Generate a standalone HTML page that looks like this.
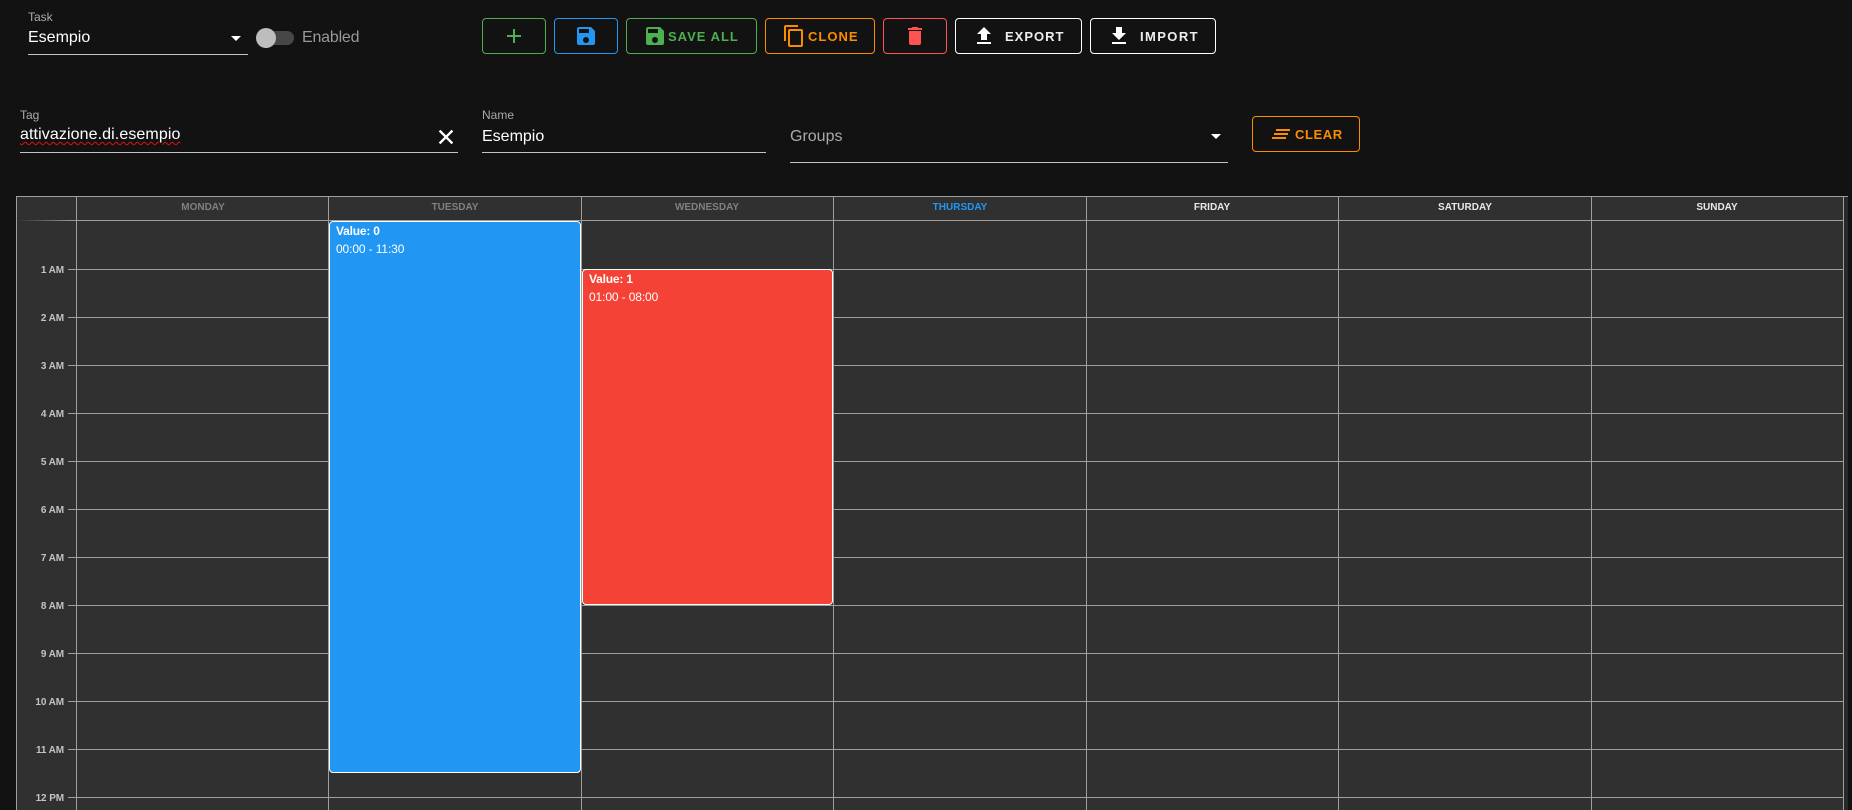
<!DOCTYPE html>
<html lang="en">
<head>
<meta charset="utf-8">
<title>Task scheduler</title>
<style>
html,body{margin:0;padding:0;background:#121212;}
body{position:relative;width:1852px;height:810px;overflow:hidden;font-family:"Liberation Sans",sans-serif;color:#fff;}
.a{position:absolute;}
.t{position:absolute;white-space:nowrap;line-height:20px;}
.btn{position:absolute;box-sizing:border-box;top:18px;height:36px;border:1px solid;border-radius:4px;}
.bt{position:absolute;white-space:nowrap;line-height:20px;font-size:13px;font-weight:bold;letter-spacing:1px;top:27px;}
svg{position:absolute;display:block;}
.v{position:absolute;top:196px;width:1px;height:614px;background:#9e9e9e;}
.h{position:absolute;left:68px;width:1775px;height:1px;background:#9e9e9e;}
.lb{position:absolute;left:16px;width:48px;text-align:right;font-size:10px;font-weight:bold;color:#c4c4c4;line-height:14px;white-space:nowrap;letter-spacing:-.1px;}
.d{position:absolute;top:198px;height:20px;line-height:20px;text-align:center;font-size:10px;font-weight:bold;white-space:nowrap;width:252px;letter-spacing:0;}
.ev{position:absolute;box-sizing:border-box;border:1px solid #fff;border-radius:4px;}
.ev b,.ev span{position:absolute;left:6px;white-space:nowrap;font-size:12px;line-height:16px;}
.ev b{top:1px;letter-spacing:-.2px;}
.ev span{top:19px;letter-spacing:-.12px;}
</style>
</head>
<body>

<!-- Task select -->
<div class="t" style="left:28px;top:7px;font-size:12px;color:#aaa;">Task</div>
<div class="t" style="left:28px;top:28px;font-size:16px;color:#fff;">Esempio</div>
<svg style="left:231px;top:36px" width="10" height="5" viewBox="0 0 10 5"><path d="M0 0H10L5 5Z" fill="#fff"/></svg>
<div class="a" style="left:28px;top:54px;width:220px;height:1px;background:#c4c4c4;"></div>

<!-- Switch -->
<div class="a" style="left:257px;top:31px;width:37px;height:14px;border-radius:7px;background:#474747;"></div>
<div class="a" style="left:256px;top:28px;width:20px;height:20px;border-radius:50%;background:#bdbdbd;"></div>
<div class="t" style="left:302px;top:28px;font-size:16px;color:#999;letter-spacing:-.2px;">Enabled</div>

<!-- Toolbar buttons -->
<div class="btn" style="left:482px;width:64px;border-color:#4caf50;"></div>
<svg style="left:502px;top:24px" width="24" height="24" viewBox="0 0 24 24"><path fill="#4caf50" d="M19,13H13V19H11V13H5V11H11V5H13V11H19V13Z"/></svg>

<div class="btn" style="left:554px;width:64px;border-color:#2196f3;"></div>
<svg style="left:574px;top:24px" width="24" height="24" viewBox="0 0 24 24"><path fill="#2196f3" d="M15,9H5V5H15M12,19A3,3 0 0,1 9,16A3,3 0 0,1 12,13A3,3 0 0,1 15,16A3,3 0 0,1 12,19M17,3H5C3.89,3 3,3.9 3,5V19A2,2 0 0,0 5,21H19A2,2 0 0,0 21,19V7L17,3Z"/></svg>

<div class="btn" style="left:626px;width:131px;border-color:#4caf50;"></div>
<svg style="left:643px;top:24px" width="24" height="24" viewBox="0 0 24 24"><path fill="#4caf50" d="M15,9H5V5H15M12,19A3,3 0 0,1 9,16A3,3 0 0,1 12,13A3,3 0 0,1 15,16A3,3 0 0,1 12,19M17,3H5C3.89,3 3,3.9 3,5V19A2,2 0 0,0 5,21H19A2,2 0 0,0 21,19V7L17,3Z"/></svg>
<div class="bt" style="left:668px;color:#4caf50;">SAVE ALL</div>

<div class="btn" style="left:765px;width:110px;border-color:#fb8c00;"></div>
<svg style="left:782px;top:24px" width="24" height="24" viewBox="0 0 24 24"><path fill="#fb8c00" d="M19,21H8V7H19M19,5H8A2,2 0 0,0 6,7V21A2,2 0 0,0 8,23H19A2,2 0 0,0 21,21V7A2,2 0 0,0 19,5M16,1H4A2,2 0 0,0 2,3V17H4V3H16V1Z"/></svg>
<div class="bt" style="left:808px;color:#fb8c00;">CLONE</div>

<div class="btn" style="left:883px;width:64px;border-color:#ff5252;"></div>
<svg style="left:903px;top:24px" width="24" height="24" viewBox="0 0 24 24"><path fill="#ff5252" d="M19,4H15.5L14.5,3H9.5L8.5,4H5V6H19M6,19A2,2 0 0,0 8,21H16A2,2 0 0,0 18,19V7H6V19Z"/></svg>

<div class="btn" style="left:955px;width:127px;border-color:#fff;"></div>
<svg style="left:972px;top:24px" width="24" height="24" viewBox="0 0 24 24"><path fill="#fff" d="M9,16V10H5L12,3L19,10H15V16H9M5,20V18H19V20H5Z"/></svg>
<div class="bt" style="left:1005px;color:#eee;">EXPORT</div>

<div class="btn" style="left:1090px;width:126px;border-color:#fff;"></div>
<svg style="left:1107px;top:24px" width="24" height="24" viewBox="0 0 24 24"><path fill="#fff" d="M5,20H19V18H5M19,9H15V3H9V9H5L12,16L19,9Z"/></svg>
<div class="bt" style="left:1140px;color:#eee;letter-spacing:1.4px;">IMPORT</div>

<!-- Tag field -->
<div class="t" style="left:20px;top:105px;font-size:12px;color:#aaa;">Tag</div>
<div class="t" style="left:20px;top:125px;font-size:16px;color:#fff;letter-spacing:.1px;text-decoration:underline wavy #e01010 1px;text-underline-offset:2px;">attivazione.di.esempio</div>
<svg style="left:434px;top:125px" width="24" height="24" viewBox="0 0 24 24"><path fill="#fff" stroke="#fff" stroke-width=".5" d="M19,6.41L17.59,5L12,10.59L6.41,5L5,6.41L10.59,12L5,17.59L6.41,19L12,13.41L17.59,19L19,17.59L13.41,12L19,6.41Z"/></svg>
<div class="a" style="left:20px;top:152px;width:438px;height:1px;background:#c4c4c4;"></div>

<!-- Name field -->
<div class="t" style="left:482px;top:105px;font-size:12px;color:#aaa;">Name</div>
<div class="t" style="left:482px;top:127px;font-size:16px;color:#fff;">Esempio</div>
<div class="a" style="left:482px;top:152px;width:284px;height:1px;background:#c4c4c4;"></div>

<!-- Groups field -->
<div class="t" style="left:790px;top:127px;font-size:16px;color:#aaa;">Groups</div>
<svg style="left:1211px;top:134px" width="10" height="5" viewBox="0 0 10 5"><path d="M0 0H10L5 5Z" fill="#fff"/></svg>
<div class="a" style="left:790px;top:162px;width:438px;height:1px;background:#c4c4c4;"></div>

<!-- Clear button -->
<div class="btn" style="left:1252px;top:116px;width:108px;border-color:#fb8c00;"></div>
<svg style="left:1269px;top:122px" width="24" height="24" viewBox="0 0 24 24"><path fill="#fb8c00" d="M5,13H19V11H5M3,17H17V15H3M7,7V9H21V7"/></svg>
<div class="bt" style="left:1295px;top:125px;color:#fb8c00;letter-spacing:.6px;">CLEAR</div>

<!-- Calendar -->
<div class="a" style="left:16px;top:196px;width:1832px;height:614px;background:#303030;"></div>
<div class="a" style="left:1844px;top:197px;width:4px;height:613px;background:#282828;"></div>
<div class="a" style="left:16px;top:196px;width:1832px;height:1px;background:#9e9e9e;"></div>
<div class="v" style="left:16px;"></div>
<div class="v" style="left:76px;"></div>
<div class="v" style="left:328px;"></div>
<div class="v" style="left:581px;"></div>
<div class="v" style="left:833px;"></div>
<div class="v" style="left:1086px;"></div>
<div class="v" style="left:1338px;"></div>
<div class="v" style="left:1591px;"></div>
<div class="v" style="left:1843px;"></div>

<div class="a" style="left:76px;top:220px;width:1767px;height:1px;background:#9e9e9e;"></div>
<div class="a" style="left:17px;top:220px;width:59px;height:1px;background:linear-gradient(90deg,#303030,#9e9e9e);"></div>

<div class="d" style="left:77px;color:#808080;">MONDAY</div>
<div class="d" style="left:329px;color:#808080;">TUESDAY</div>
<div class="d" style="left:581px;color:#808080;">WEDNESDAY</div>
<div class="d" style="left:834px;color:#2196f3;">THURSDAY</div>
<div class="d" style="left:1086px;color:#e8e8e8;">FRIDAY</div>
<div class="d" style="left:1339px;color:#e8e8e8;">SATURDAY</div>
<div class="d" style="left:1591px;color:#e8e8e8;">SUNDAY</div>

<div class="h" style="top:269px;"></div>
<div class="h" style="top:317px;"></div>
<div class="h" style="top:365px;"></div>
<div class="h" style="top:413px;"></div>
<div class="h" style="top:461px;"></div>
<div class="h" style="top:509px;"></div>
<div class="h" style="top:557px;"></div>
<div class="h" style="top:605px;"></div>
<div class="h" style="top:653px;"></div>
<div class="h" style="top:701px;"></div>
<div class="h" style="top:749px;"></div>
<div class="h" style="top:797px;"></div>

<div class="lb" style="top:264px;">1 AM</div>
<div class="lb" style="top:312px;">2 AM</div>
<div class="lb" style="top:360px;">3 AM</div>
<div class="lb" style="top:408px;">4 AM</div>
<div class="lb" style="top:456px;">5 AM</div>
<div class="lb" style="top:504px;">6 AM</div>
<div class="lb" style="top:552px;">7 AM</div>
<div class="lb" style="top:600px;">8 AM</div>
<div class="lb" style="top:648px;">9 AM</div>
<div class="lb" style="top:696px;">10 AM</div>
<div class="lb" style="top:744px;">11 AM</div>
<div class="lb" style="top:792px;">12 PM</div>

<div class="ev" style="left:329px;top:221px;width:252px;height:552px;background:#2196f3;">
  <b>Value: 0</b><span>00:00 - 11:30</span>
</div>
<div class="ev" style="left:582px;top:269px;width:251px;height:336px;background:#f44336;">
  <b>Value: 1</b><span>01:00 - 08:00</span>
</div>

</body>
</html>
